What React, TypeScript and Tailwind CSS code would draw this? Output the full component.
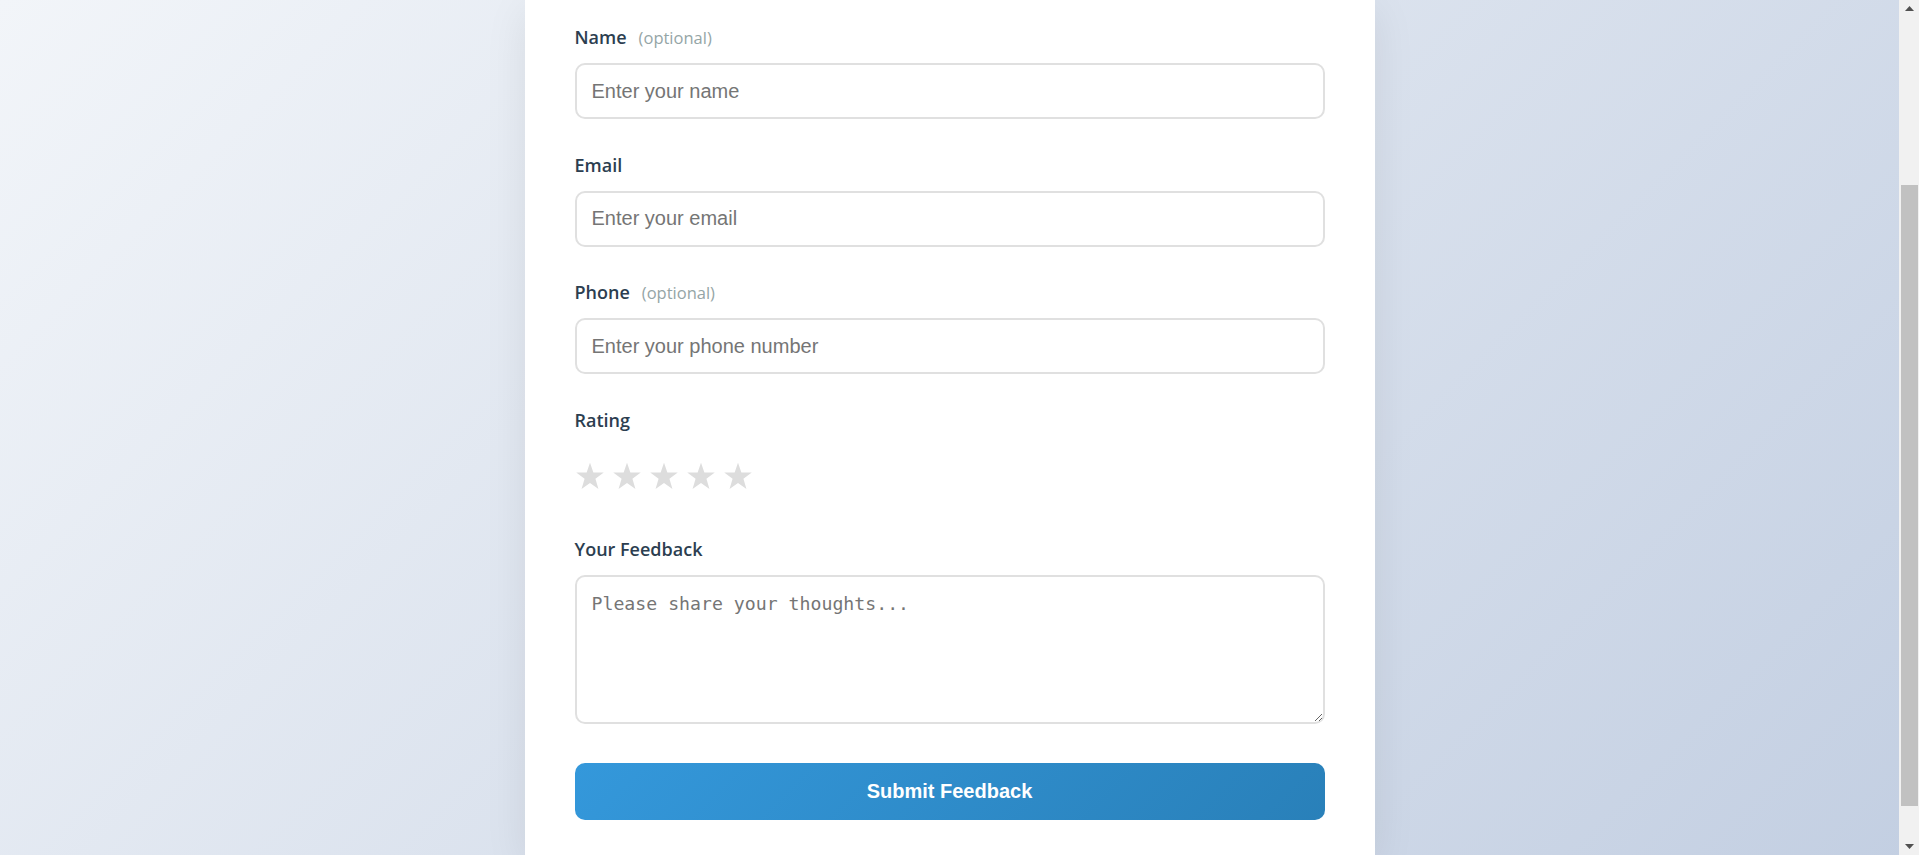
const labelCls = 'block text-[18px] leading-[29px] pt-[1.5px] font-semibold text-[#2c3e50] mb-[11px]'
const optionalCls = 'ml-[12px] text-[16.5px] font-normal text-[#95a5a6]'
const inputCls =
  'block w-full h-[56px] px-[15px] rounded-[10px] border-2 border-[#e0e0e0] bg-white text-[20px] text-[#333] placeholder:text-[#757575] outline-none focus:border-[#3498db]'

function Star() {
  return (
    <svg width="30" height="28" viewBox="0 0 24 23" className="block">
      <polygon
        points="12,0.6 14.75,8.6 23.3,8.7 16.45,13.85 18.95,22.2 12,17.2 5.05,22.2 7.55,13.85 0.7,8.7 9.25,8.6"
        fill="#dddddd"
      />
    </svg>
  )
}

// the window scrollbar as it shows in the capture
function FakeScrollbar() {
  return (
    <div className="fixed top-0 right-0 w-[20px] h-screen bg-[#f1f1f1] flex flex-col items-center">
      <div className="h-[17px] w-full flex items-center justify-center">
        <svg width="9" height="5" viewBox="0 0 9 5">
          <polygon points="4.5,0 9,5 0,5" fill="#505050" />
        </svg>
      </div>
      <div className="h-[168px]" />
      <div className="ml-[1px] w-[17px] h-[621px] bg-[#c1c1c1]" />
      <div className="flex-1" />
      <div className="h-[17px] w-full flex items-center justify-center">
        <svg width="9" height="5" viewBox="0 0 9 5">
          <polygon points="0,0 9,0 4.5,5" fill="#505050" />
        </svg>
      </div>
    </div>
  )
}

export default function App() {
  return (
    <div
      className="h-screen overflow-hidden bg-[linear-gradient(135deg,#f2f5f9_0%,#c3cfe2_100%)] pr-[20px]"
      style={{ fontFamily: '"Open Sans", "Noto Sans", sans-serif' }}
    >
      <div className="mx-auto w-[850px] bg-white shadow-[0_10px_40px_rgba(0,0,0,0.08)] px-[50px] pt-[21.5px] pb-[36px]">
        <form onSubmit={(e) => e.preventDefault()}>
          <div className="mb-[30px]">
            <label className={labelCls}>
              Name<span className={optionalCls}>(optional)</span>
            </label>
            <input
              type="text"
              placeholder="Enter your name"
              className={inputCls}
              style={{ fontFamily: '"Liberation Sans", Arial, sans-serif' }}
            />
          </div>

          <div className="mb-[30px]">
            <label className={labelCls}>Email</label>
            <input
              type="email"
              placeholder="Enter your email"
              className={inputCls}
              style={{ fontFamily: '"Liberation Sans", Arial, sans-serif' }}
            />
          </div>

          <div className="mb-[30px]">
            <label className={labelCls}>
              Phone<span className={optionalCls}>(optional)</span>
            </label>
            <input
              type="tel"
              placeholder="Enter your phone number"
              className={inputCls}
              style={{ fontFamily: '"Liberation Sans", Arial, sans-serif' }}
            />
          </div>

          <div className="mb-[30px]">
            <label className={labelCls}>Rating</label>
            <div className="flex items-center gap-[7px] h-[58px] pt-[3px]">
              {[1, 2, 3, 4, 5].map((n) => (
                <button key={n} type="button" className="cursor-pointer">
                  <Star />
                </button>
              ))}
            </div>
          </div>

          <div className="mb-[38.5px]">
            <label className={labelCls}>Your Feedback</label>
            <textarea
              placeholder="Please share your thoughts..."
              className="block w-full h-[149px] px-[15px] pt-[13px] pb-[15px] rounded-[10px] border-2 border-[#e0e0e0] bg-white text-[18.2px] text-[#333] placeholder:text-[#757575] outline-none focus:border-[#3498db]"
              style={{ fontFamily: '"DejaVu Sans Mono", monospace' }}
            />
          </div>

          <button
            type="submit"
            className="block w-full h-[57px] rounded-[10px] bg-[linear-gradient(135deg,#3498db_0%,#2980b9_100%)] text-white text-[20px] font-bold cursor-pointer"
            style={{ fontFamily: '"Liberation Sans", Arial, sans-serif' }}
          >
            Submit Feedback
          </button>
        </form>
      </div>
      <FakeScrollbar />
    </div>
  )
}
